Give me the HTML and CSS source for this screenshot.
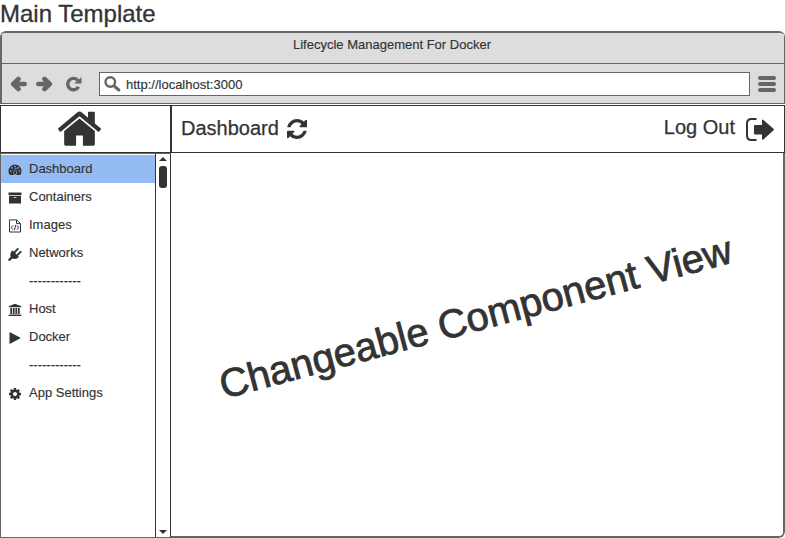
FILE: index.html
```html
<!DOCTYPE html>
<html lang="en">
<head>
<meta charset="utf-8">
<title>Main Template</title>
<link rel="stylesheet" href="styles.css">
</head>
<body>
<h1 class="page-title">Main Template</h1>
<div class="window">
  <div class="titlebar">Lifecycle Management For Docker</div>
  <div class="toolbar">
    <svg class="nav" viewBox="0 0 17 16"><path d="M8.500 3 3.200 8 8.500 13M3.500 8H14.700"/></svg>
    <svg class="nav forward" viewBox="0 0 17 16"><path d="M8.500 3 13.800 8 8.500 13M13.500 8H2.300"/></svg>
    <svg class="reload" viewBox="0 0 17 16"><path class="ring" d="M12.700 4.300A5.700 5.700 0 1 0 13.500 10.700"/><path d="M16.500 1V7.500H9.200Z"/></svg>
    <div class="address">
      <svg class="search" viewBox="0 0 17 16"><circle cx="6.300" cy="6" r="4.800"/><path d="M10 9.800 14.800 14"/></svg>
      <span>http://localhost:3000</span>
    </div>
    <div class="menu"><i></i><i></i><i></i></div>
  </div>
  <header class="header">
    <div class="home">
      <svg viewBox="89 240 1614 1296"><path d="M1472 992v480q0 26-19 45t-45 19h-384v-384h-256v384h-384q-26 0-45-19t-19-45v-480q0-1 .5-3t.5-3l575-474 575 474q1 2 1 6zm223-69l-62 74q-8 9-21 11h-3q-13 0-21-7l-692-577-692 577q-12 8-24 7-13-2-21-11l-62-74q-8-10-7-23.500t11-21.500l719-599q32-26 76-26t76 26l244 204v-195q0-14 9-23t23-9h192q14 0 23 9t9 23v408l219 182q10 8 11 21.500t-7 23.500z"/></svg>
    </div>
    <div class="heading">
      <span>Dashboard</span>
      <svg class="refresh" viewBox="128 128 1536 1536"><path d="M1639 1056q0 5-1 7-64 268-268 434.500t-478 166.500q-146 0-282.500-55t-243.500-157l-129 129q-19 19-45 19t-45-19-19-45v-448q0-26 19-45t45-19h448q26 0 45 19t19 45-19 45l-137 137q71 66 161 102t187 36q134 0 250-65t186-179q11-17 53-117 8-23 30-23h192q13 0 22.500 9.500t9.500 22.500zm25-800v448q0 26-19 45t-45 19h-448q-26 0-45-19t-19-45 19-45l138-138q-148-137-349-137-134 0-250 65t-186 179q-11 17-53 117-8 23-30 23h-199q-13 0-22.500-9.500t-9.500-22.500v-7q65-268 270-434.500t480-166.500q146 0 284 55.500t245 156.500l130-129q19-19 45-19t45 19 19 45z"/></svg>
      <span class="logout">Log Out</span>
      <svg class="exit" viewBox="0 0 28 23"><path class="line" d="M10.500 1H5.500Q1 1 1 5.500V17.500Q1 22 5.500 22H10.500"/><path d="M8 8Q8 7 9 7H16V2.500Q16 .8 17.400 2L27.500 10.700Q28.300 11.500 27.500 12.300L17.400 21.500Q16 22.500 16 20.500V16.500H9Q8 16.500 8 15.500Z"/></svg>
    </div>
  </header>
  <main class="content">
    <aside class="sidebar">
      <ul class="items">
        <li class="active"><svg viewBox="0 0 14 14"><path d="M7 1.500A6.500 6.500 0 0 0 .5 8Q.5 10 1.600 11.700Q1.900 12 2.300 12H11.700Q12.100 12 12.400 11.700Q13.500 10 13.500 8A6.500 6.500 0 0 0 7 1.500Z"/><g class="cut"><circle cx="2.700" cy="8" r=".8"/><circle cx="4" cy="4.900" r=".8"/><circle cx="7" cy="3.600" r=".8"/><circle cx="10" cy="4.900" r=".8"/><circle cx="11.300" cy="8" r=".8"/><path d="M6.200 8.300 7.100 5 8.700 5.200 8 8.300A1.900 1.900 0 1 1 6.200 8.300Z"/></g><path class="needle" d="M7 9.700 7.900 5.500"/><circle cx="7" cy="9.800" r="1.500"/></svg>Dashboard</li>
        <li><svg viewBox="0 0 14 14"><path d="M.5 1.500H13.500V4.300H.5ZM1 5H13V12.500H1Z"/><path class="slot" d="M5.500 6.500H8.500"/></svg>Containers</li>
        <li><svg viewBox="0 0 14 14"><path class="thin" d="M1.500 .9H8.500L12.500 4.500V13H1.500ZM8.500 1V4.600H12.100M5 6.300 3.300 8.500 5 10.700M9 6.300 10.700 8.500 9 10.700M7.700 5.800 6.400 11.200"/></svg>Images</li>
        <li><svg viewBox="0 0 14 14"><path d="M4.300 3.200 11 9.900Q8 13 4.500 11.500L2 13.800H.3V12.200L2.700 9.700Q1.300 6.200 4.300 3.200Z"/><path class="prong" d="M6.500 5.500 9.800 1.900M9.300 8.200 12.700 4.800"/></svg>Networks</li>
        <li class="rule">------------</li>
        <li><svg viewBox="0 0 14 14"><path d="M7 .8 13.300 3.300V4.300H.7V3.300ZM2.300 5H4.200V10.200H2.300ZM5 5H6.600V10.200H5ZM7.400 5H9V10.200H7.400ZM9.800 5H11.700V10.200H9.800ZM1.400 10.500H12.600V11.400H1.400ZM.5 11.900H13.500V13H.5Z"/></svg>Host</li>
        <li><svg viewBox="0 0 14 14"><path d="M1.500 1.500Q1.500 1 2 1.200L12 6.600Q12.500 7 12 7.400L2 12.800Q1.500 13 1.500 12.500Z"/></svg>Docker</li>
        <li class="rule">------------</li>
        <li><svg viewBox="0 0 1792 1792"><path d="M1152 896q0-106-75-181t-181-75-181 75-75 181 75 181 181 75 181-75 75-181zm512-109v222q0 12-8 23t-20 13l-185 28q-19 54-39 91 35 50 107 138 10 12 10 25t-9 23q-27 37-99 108t-94 71q-12 0-26-9l-138-108q-44 23-91 38-16 136-29 186-7 28-36 28h-222q-14 0-24.500-8.500t-11.500-21.500l-28-184q-49-16-90-37l-141 107q-10 9-25 9-14 0-25-11-126-114-165-168-7-10-7-23 0-12 8-23 15-21 51-66.500t54-70.500q-27-50-41-99l-183-27q-13-2-21-12.500t-8-23.500v-222q0-12 8-23t19-13l186-28q14-46 39-92-40-57-107-138-10-12-10-24 0-10 9-23 26-36 98.500-107.500t94.500-71.500q13 0 26 10l138 107q44-23 91-38 16-136 29-186 7-28 36-28h222q14 0 24.500 8.500t11.500 21.500l28 184q49 16 90 37l142-107q9-9 24-9 13 0 25 10 129 119 165 170 7 8 7 22 0 12-8 23-15 21-51 66.500t-54 70.500q26 50 41 98l183 28q13 2 21 12.500t8 23.500z"/></svg>App Settings</li>
      </ul>
      <div class="scrollbar">
        <svg class="arrow" viewBox="0 0 8 4"><path d="M0 4 4 0 8 4Z"/></svg>
        <div class="thumb"></div>
        <svg class="arrow down" viewBox="0 0 8 4"><path d="M0 0 4 4 8 0Z"/></svg>
      </div>
    </aside>
    <section class="view"><p>Changeable Component View</p></section>
  </main>
</div>
</body>
</html>
```
FILE: styles.css
```css
* { box-sizing: border-box; }
body {
  margin: 0;
  width: 785px;
  height: 538px;
  overflow: hidden;
  display: flex;
  flex-direction: column;
  background: #fff;
  color: #333;
  font: 13px/16px "Liberation Sans", Arial, sans-serif;
  -webkit-text-stroke: .15px #333;
}
svg { display: block; flex: none; fill: #333; }
.page-title {
  margin: 0;
  height: 31px;
  font-size: 24px;
  font-weight: normal;
  line-height: 28px;
  -webkit-text-stroke-width: .3px;
}
.window {
  height: 507px;
  display: flex;
  flex-direction: column;
  background: linear-gradient(#666, #666) left bottom / 1px 385px no-repeat, #fff;
  border-top: 2px solid #666;
  border-radius: 6px 6px 6px 0;
  overflow: hidden;
}
.titlebar {
  height: 31px;
  padding: 4px 2px 0 0;
  text-align: center;
  background: #ddd;
  border: solid #666;
  border-width: 0 1px 1px 2px;
}
.toolbar {
  height: 40px;
  padding: 1px 8px 0 8px;
  display: flex;
  align-items: center;
  background: #ddd;
  border: solid #666;
  border-width: 0 1px 1px 2px;
}
.nav { width: 17px; height: 16px; margin-right: 9px; fill: none; stroke: #666; stroke-width: 4.600; stroke-linecap: round; stroke-linejoin: round; }
.forward { margin-right: 12px; }
.reload { width: 17px; height: 16px; fill: #666; }
.ring { fill: none; stroke: #666; stroke-width: 3.400; }
.address {
  width: 651px;
  height: 24px;
  margin-left: 17px;
  padding-left: 4px;
  display: flex;
  align-items: center;
  gap: 5px;
  background: #fff;
  border: 1px solid #666;
}
.address span { padding-top: 2px; }
.search { width: 17px; height: 16px; fill: none; stroke: #666; stroke-width: 2.400; }
.search path { stroke-width: 3; stroke-linecap: round; }
.menu { display: grid; gap: 2px; width: 18px; margin-left: auto; }
.menu i { height: 4px; border-radius: 2px; background: #666; }
.header {
  height: 48px;
  margin-top: 1px;
  display: flex;
  border: 1px solid #333;
  background: #fff;
}
.home { width: 171px; display: flex; justify-content: center; padding: 5px 12px 0 0; border-right: 2px solid #333; }
.home svg { width: 43px; height: 35px; }
.heading { flex: 1; display: flex; padding: 10px 10px 0 9px; font-size: 20px; line-height: 24px; -webkit-text-stroke-width: .25px; }
.refresh { width: 20px; height: 20px; margin: 3px 0 0 8px; }
.logout { margin-left: auto; margin-top: -1px; }
.exit { width: 28px; height: 23px; margin: 2px 0 0 11px; }
.exit .line { fill: none; stroke: #333; stroke-width: 2; }
.content { flex: 1; display: flex; }
.sidebar {
  width: 171px;
  display: flex;
  border: solid #666;
  border-width: 1px 0 1px 1px;
}
.items { flex: 1; margin: 0; padding: 1px 0 0; list-style: none; }
.items li { height: 28px; padding: 0 0 0 7px; display: flex; align-items: center; gap: 7px; }
.items svg { width: 14px; height: 14px; margin-top: 1px; }
.items .active { background: #94bbf2; }
.items .rule { padding-left: 28px; }
.cut { fill: #94bbf2; }
.needle { stroke: #333; }
.slot { stroke: #bbb; }
.thin { fill: none; stroke: #333; }
.prong { stroke: #333; stroke-width: 1.900; stroke-linecap: round; }
.scrollbar {
  width: 16px;
  display: flex;
  flex-direction: column;
  align-items: center;
  padding: 3px 0;
  border: solid #333;
  border-width: 0 1px;
}
.arrow { width: 8px; height: 4px; }
.thumb { width: 8px; height: 22px; margin-top: 5px; border-radius: 3px; background: #333; }
.down { margin-top: auto; }
.view {
  flex: 1;
  display: flex;
  align-items: center;
  justify-content: center;
  border: solid #666;
  border-width: 0 2px 2px 0;
  border-bottom-right-radius: 6px;
}
.view p { margin: 0 3px 55px 0; font-size: 40px; line-height: 48px; letter-spacing: -.08px; white-space: nowrap; transform: rotate(-15deg); -webkit-text-stroke-width: .8px; }
```
